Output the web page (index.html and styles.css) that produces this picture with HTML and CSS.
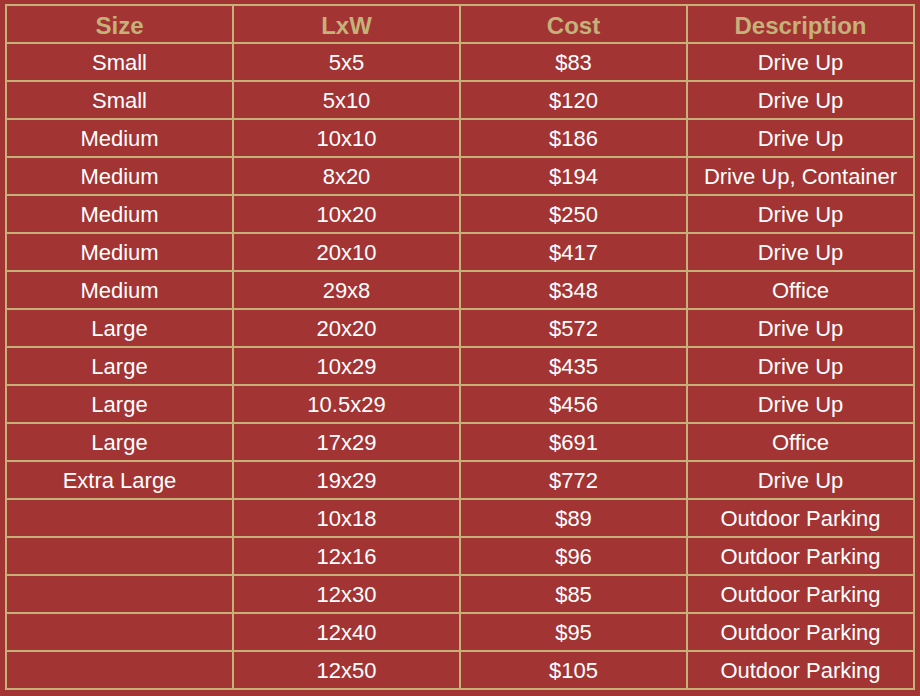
FILE: index.html
```html
<!DOCTYPE html>
<html>
<head>
<meta charset="utf-8">
<link rel="stylesheet" href="styles.css">
</head>
<body>
<div class="wrap">
<table class="units">
<thead>
<tr><th>Size</th><th>LxW</th><th>Cost</th><th>Description</th></tr>
</thead>
<tbody>
<tr><td>Small</td><td>5x5</td><td>$83</td><td>Drive Up</td></tr>
<tr><td>Small</td><td>5x10</td><td>$120</td><td>Drive Up</td></tr>
<tr><td>Medium</td><td>10x10</td><td>$186</td><td>Drive Up</td></tr>
<tr><td>Medium</td><td>8x20</td><td>$194</td><td>Drive Up, Container</td></tr>
<tr><td>Medium</td><td>10x20</td><td>$250</td><td>Drive Up</td></tr>
<tr><td>Medium</td><td>20x10</td><td>$417</td><td>Drive Up</td></tr>
<tr><td>Medium</td><td>29x8</td><td>$348</td><td>Office</td></tr>
<tr><td>Large</td><td>20x20</td><td>$572</td><td>Drive Up</td></tr>
<tr><td>Large</td><td>10x29</td><td>$435</td><td>Drive Up</td></tr>
<tr><td>Large</td><td>10.5x29</td><td>$456</td><td>Drive Up</td></tr>
<tr><td>Large</td><td>17x29</td><td>$691</td><td>Office</td></tr>
<tr><td>Extra Large</td><td>19x29</td><td>$772</td><td>Drive Up</td></tr>
<tr><td></td><td>10x18</td><td>$89</td><td>Outdoor Parking</td></tr>
<tr><td></td><td>12x16</td><td>$96</td><td>Outdoor Parking</td></tr>
<tr><td></td><td>12x30</td><td>$85</td><td>Outdoor Parking</td></tr>
<tr><td></td><td>12x40</td><td>$95</td><td>Outdoor Parking</td></tr>
<tr><td></td><td>12x50</td><td>$105</td><td>Outdoor Parking</td></tr>
</tbody>
</table>
</div>
</body>
</html>
```
FILE: styles.css
```css
html, body {
  margin: 0;
  padding: 0;
  background: #a33434;
}
.wrap {
  padding: 4px 0 0 5px;
}
.units {
  border-collapse: collapse;
  table-layout: fixed;
  width: 910px;
  font-family: "Liberation Sans", Arial, sans-serif;
  color: #ffffff;
}
.units th, .units td {
  border: 2px solid #c7b179;
  height: 35px;
  padding: 1px 0 0 0;
  text-align: center;
  vertical-align: middle;
  font-size: 22px;
  line-height: 26px;
}
.units th {
  color: #c4b278;
  font-weight: bold;
  font-size: 24px;
  padding-top: 3px;
  height: 33px;
}
```
